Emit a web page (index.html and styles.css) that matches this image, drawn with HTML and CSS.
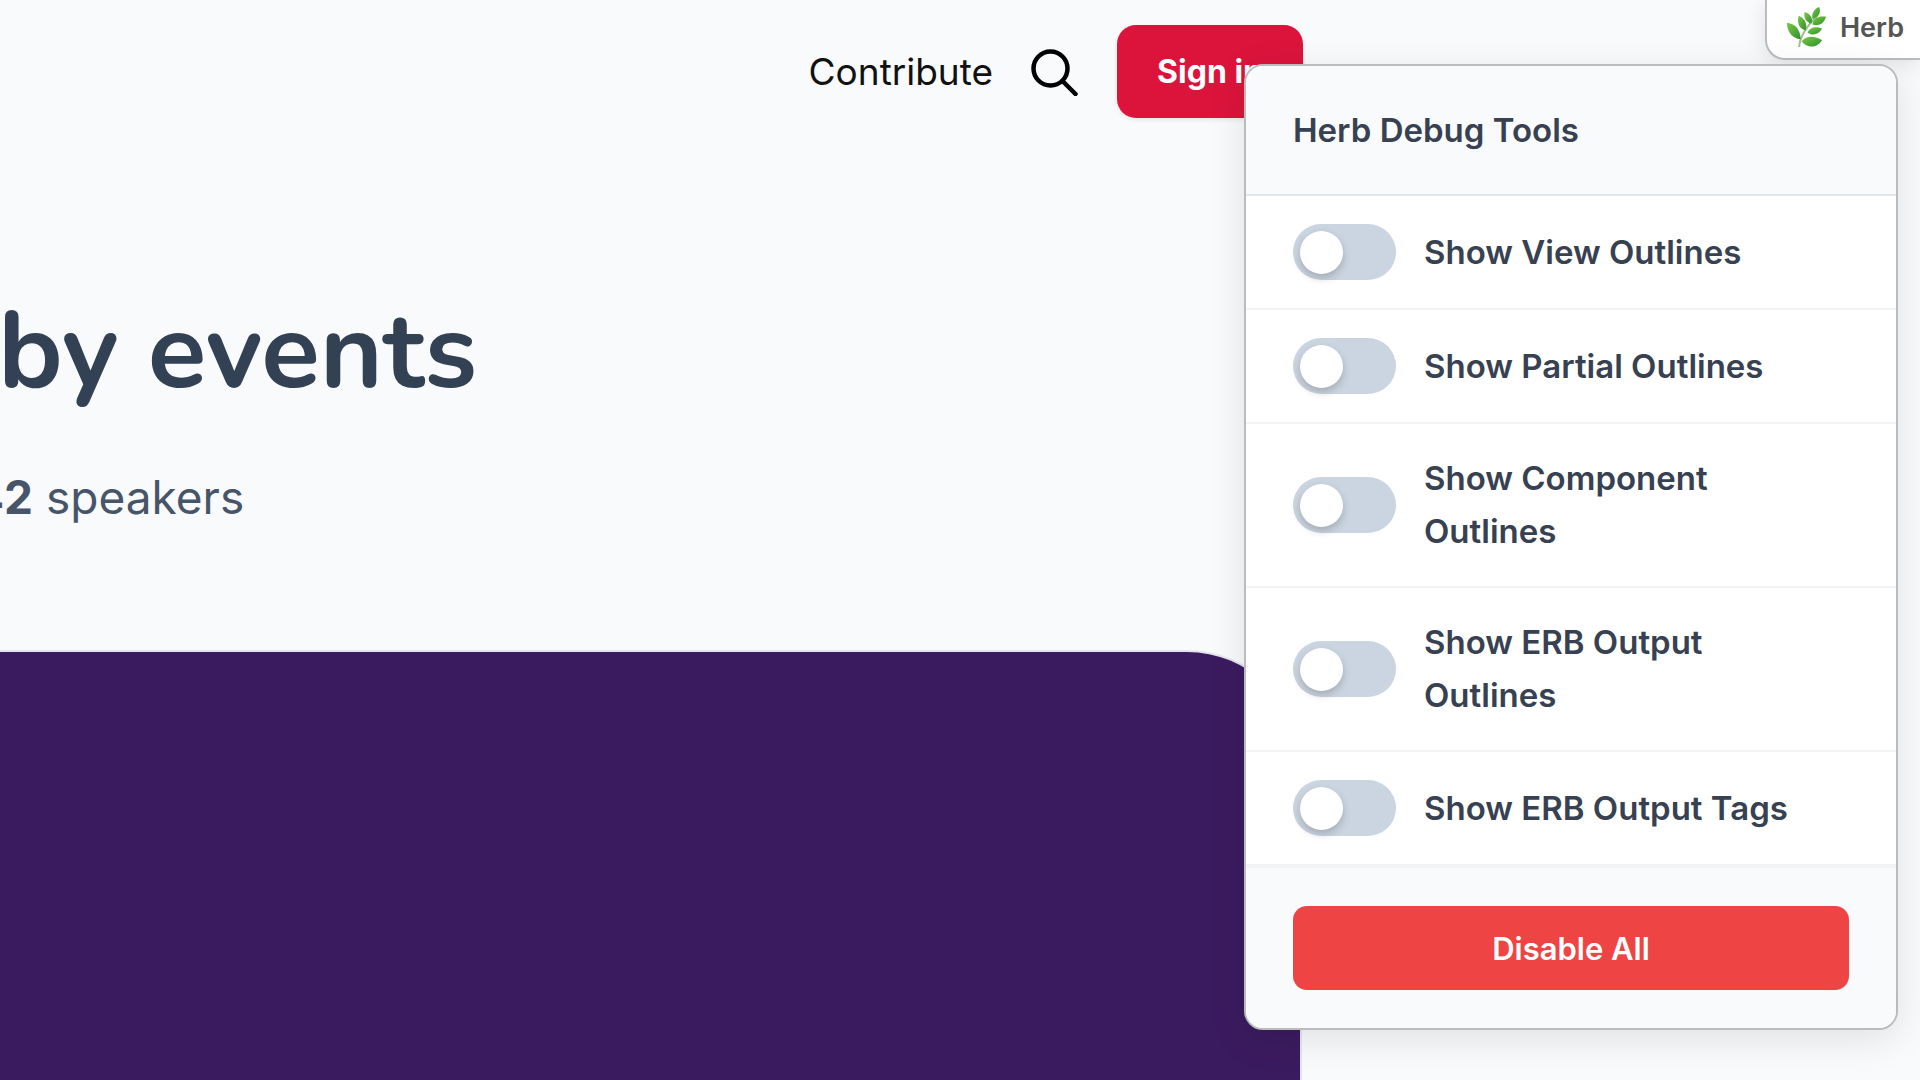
FILE: index.html
```html
<!DOCTYPE html>
<html lang="en">
<head>
    <meta charset="utf-8">
    <title>Ruby events</title>
    <link rel="stylesheet" href="styles.css">
</head>
<body>
    <div class="page">
        <header class="navbar">
            <a class="nav-link" href="#contribute">Contribute</a>
            <button class="search-button" type="button" aria-label="Search">
                <svg viewBox="0 0 48 48" fill="none" stroke="currentColor" stroke-width="4.5" stroke-linecap="round">
                    <circle cx="19.5" cy="20.5" r="17"/>
                    <path d="M32 33.5 44.5 46"/>
                </svg>
            </button>
            <a class="sign-in" href="#sign-in">Sign in</a>
        </header>

        <main class="hero">
            <h1>by events</h1>
            <p class="stats"><strong>42</strong> speakers</p>
            <section class="banner"></section>
        </main>
    </div>

    <button class="herb-tab" type="button">
        <svg class="herb-icon" viewBox="0 0 40 42">
            <defs>
                <linearGradient id="leaf" x1="0" y1="0" x2="1" y2="1">
                    <stop offset="0" stop-color="#7ac943"/>
                    <stop offset="1" stop-color="#2f9130"/>
                </linearGradient>
            </defs>
            <path d="M12.5 41C13 31 20 20 31 9" fill="none" stroke="#a3bd8c" stroke-width="2"/>
            <g fill="url(#leaf)">
                <path d="M26 12C25 6 28 2 33 0c2 5 0 10-6 12z"/>
                <path d="M25 17c-6-2-8-6-7-12 6 2 9 6 7 12z"/>
                <path d="M26 18c1-7 7-9 14-8-2 7-7 10-14 8z"/>
                <path d="M19 24C12 22 10 16 12 9c7 3 9 9 7 15z"/>
                <path d="M21 26c3-6 9-6 15-4-3 6-10 8-15 4z"/>
                <path d="M14 33C5 32 0 25 0 16c9 1 14 8 14 17z"/>
                <path d="M15 35c5-6 14-6 21-1-5 8-15 9-21 1z"/>
            </g>
        </svg>
        Herb
    </button>

    <div class="debug-menu">
        <h2 class="menu-header">Herb Debug Tools</h2>
        <label class="toggle-row">
            <input type="checkbox" class="toggle">
            <span>Show View Outlines</span>
        </label>
        <label class="toggle-row">
            <input type="checkbox" class="toggle">
            <span>Show Partial Outlines</span>
        </label>
        <label class="toggle-row">
            <input type="checkbox" class="toggle">
            <span>Show Component Outlines</span>
        </label>
        <label class="toggle-row">
            <input type="checkbox" class="toggle">
            <span>Show ERB Output Outlines</span>
        </label>
        <label class="toggle-row">
            <input type="checkbox" class="toggle">
            <span>Show ERB Output Tags</span>
        </label>
        <div class="menu-footer">
            <button class="disable-all" type="button">Disable All</button>
        </div>
    </div>
</body>
</html>
```
FILE: styles.css
```css
:root {
    --background: #f8fafc;
    --crimson: #dc143c;
    --purple: #3b1b5f;
    --red: #ef4444;
    --text: #374151;
    --outline: #b9bbbd;
}

* {
    box-sizing: border-box;
}

body {
    margin: 0;
    background: var(--background);
    font-family: Inter, sans-serif;
    overflow: hidden;
}

.page {
    display: flex;
    flex-direction: column;
    height: 100vh;
    padding-right: 617px;
}

.navbar {
    display: flex;
    justify-content: flex-end;
    align-items: center;
    gap: 38px;
    padding-top: 25px;
}

.nav-link {
    color: #111;
    font-size: 37px;
    text-decoration: none;
}

.search-button {
    width: 48px;
    height: 48px;
    padding: 0;
    border: none;
    background: none;
    color: #000;
}

.search-button svg {
    display: block;
}

.sign-in {
    padding: 0 40px;
    border-radius: 19px;
    background: var(--crimson);
    color: white;
    font-size: 32px;
    font-weight: 700;
    line-height: 93px;
    text-decoration: none;
    box-shadow: 0 2px 5px rgba(0, 0, 0, 0.08);
}

.hero {
    flex: 1;
    display: flex;
    flex-direction: column;
}

h1 {
    margin: 168px 0 0 -2px;
    color: #334155;
    font-family: Nunito, Lato, sans-serif;
    font-size: 108px;
    font-weight: 700;
    line-height: 132px;
}

.stats {
    margin: 47px 0 0 -27px;
    color: #475569;
    font-size: 46px;
    line-height: 64px;
}

.stats strong {
    font-weight: 700;
}

.banner {
    flex: 1;
    margin: 123px 3px 0 0;
    border-radius: 0 113px 0 0;
    background: var(--purple);
    box-shadow: 0 0 0 2px #e5e3ec;
}

.herb-tab {
    position: absolute;
    top: 0;
    right: 0;
    display: flex;
    align-items: center;
    gap: 14px;
    height: 60px;
    padding: 0 16px 4px 20px;
    border: 2px solid var(--outline);
    border-width: 0 0 2px 2px;
    border-radius: 0 0 0 20px;
    background: white;
    color: #555;
    font-family: inherit;
    font-size: 27px;
    font-weight: 600;
    box-shadow: 0 4px 20px rgba(0, 0, 0, 0.1);
}

.herb-icon {
    width: 39px;
    height: 41px;
}

.debug-menu {
    position: absolute;
    top: 64px;
    right: 22px;
    width: 654px;
    border: 2px solid var(--outline);
    border-radius: 19px;
    background: white;
    color: var(--text);
    font-size: 33px;
    font-weight: 600;
    line-height: 53px;
    box-shadow: 0 9px 38px rgba(0, 0, 0, 0.1);
    overflow: hidden;
}

.menu-header {
    margin: 0;
    padding: 38px 47px 37px;
    border-bottom: 2px solid #e2e6ea;
    background: var(--background);
    font-size: 33px;
    font-weight: 600;
}

.toggle-row {
    display: flex;
    align-items: center;
    gap: 28px;
    padding: 28px 64px 28px 47px;
    border-bottom: 2px solid #f1f3f5;
}

.toggle {
    appearance: none;
    display: flex;
    align-items: center;
    flex-shrink: 0;
    width: 103px;
    height: 56px;
    margin: 0;
    padding: 0 7px;
    border-radius: 28px;
    background: #cbd5e1;
}

.toggle::before {
    content: "";
    width: 43px;
    height: 43px;
    border-radius: 50%;
    background: white;
    box-shadow: 0 4px 8px rgba(0, 0, 0, 0.2);
}

.toggle:checked {
    justify-content: flex-end;
    background: #8b5cf6;
}

.menu-footer {
    padding: 38px 47px;
    border-top: 2px solid #f1f3f5;
    background: var(--background);
}

.disable-all {
    display: block;
    width: 100%;
    height: 84px;
    border: none;
    border-radius: 14px;
    background: var(--red);
    color: white;
    font-family: inherit;
    font-size: 31px;
    font-weight: 600;
}
```
